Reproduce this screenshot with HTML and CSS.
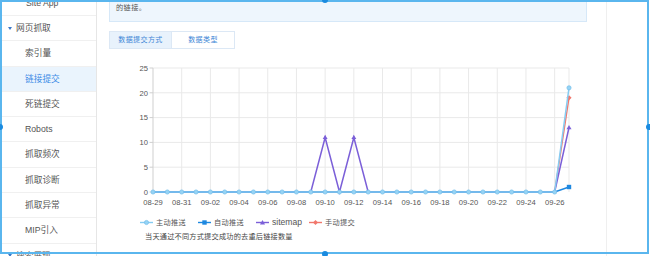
FILE: index.html
```html
<!DOCTYPE html>
<html lang="zh-CN">
<head>
<meta charset="utf-8">
<title>链接提交</title>
<link rel="stylesheet" href="styles.css">
</head>
<body>
<div class="page">
  <aside class="sidebar">
    <div class="nav-item first">Site App</div>
    <div class="nav-group"><span class="caret"></span>网页抓取</div>
    <div class="nav-item">索引量</div>
    <div class="nav-item active">链接提交</div>
    <div class="nav-item">死链提交</div>
    <div class="nav-item">Robots</div>
    <div class="nav-item">抓取频次</div>
    <div class="nav-item">抓取诊断</div>
    <div class="nav-item">抓取异常</div>
    <div class="nav-item">MIP引入</div>
    <div class="nav-group"><span class="caret"></span>搜索展现</div>
  </aside>

  <main class="main">
    <div class="notice">的链接。</div>
    <div class="tabs">
      <div class="tab active">数据提交方式</div>
      <div class="tab">数据类型</div>
    </div>

    <svg class="chart" viewBox="109 52 478 158" xmlns="http://www.w3.org/2000/svg">
      <g class="grid" stroke="#e9e9e9" stroke-width="1">
        <line x1="153" y1="68" x2="569" y2="68"/>
        <line x1="153" y1="92.8" x2="569" y2="92.8"/>
        <line x1="153" y1="117.6" x2="569" y2="117.6"/>
        <line x1="153" y1="142.4" x2="569" y2="142.4"/>
        <line x1="153" y1="167.2" x2="569" y2="167.2"/>
        <line x1="181.69" y1="68" x2="181.69" y2="192"/>
        <line x1="210.38" y1="68" x2="210.38" y2="192"/>
        <line x1="239.07" y1="68" x2="239.07" y2="192"/>
        <line x1="267.76" y1="68" x2="267.76" y2="192"/>
        <line x1="296.45" y1="68" x2="296.45" y2="192"/>
        <line x1="325.14" y1="68" x2="325.14" y2="192"/>
        <line x1="353.83" y1="68" x2="353.83" y2="192"/>
        <line x1="382.52" y1="68" x2="382.52" y2="192"/>
        <line x1="411.21" y1="68" x2="411.21" y2="192"/>
        <line x1="439.9" y1="68" x2="439.9" y2="192"/>
        <line x1="468.59" y1="68" x2="468.59" y2="192"/>
        <line x1="497.28" y1="68" x2="497.28" y2="192"/>
        <line x1="525.97" y1="68" x2="525.97" y2="192"/>
        <line x1="554.66" y1="68" x2="554.66" y2="192"/>
        <line x1="569" y1="68" x2="569" y2="192"/>
      </g>
      <g stroke="#cfcfcf" stroke-width="1">
        <line x1="153" y1="68" x2="153" y2="192"/>
        <line x1="149.5" y1="68" x2="153" y2="68"/>
        <line x1="149.5" y1="92.8" x2="153" y2="92.8"/>
        <line x1="149.5" y1="117.6" x2="153" y2="117.6"/>
        <line x1="149.5" y1="142.4" x2="153" y2="142.4"/>
        <line x1="149.5" y1="167.2" x2="153" y2="167.2"/>
        <line x1="149.5" y1="192" x2="153" y2="192"/>
      </g>
      <g class="ylab" text-anchor="end">
        <text x="148" y="70.7">25</text>
        <text x="148" y="95.5">20</text>
        <text x="148" y="120.3">15</text>
        <text x="148" y="145.1">10</text>
        <text x="148" y="169.9">5</text>
        <text x="148" y="194.7">0</text>
      </g>
      <g class="xlab" text-anchor="middle">
        <text x="153" y="204.8">08-29</text>
        <text x="181.69" y="204.8">08-31</text>
        <text x="210.38" y="204.8">09-02</text>
        <text x="239.07" y="204.8">09-04</text>
        <text x="267.76" y="204.8">09-06</text>
        <text x="296.45" y="204.8">09-08</text>
        <text x="325.14" y="204.8">09-10</text>
        <text x="353.83" y="204.8">09-12</text>
        <text x="382.52" y="204.8">09-14</text>
        <text x="411.21" y="204.8">09-16</text>
        <text x="439.9" y="204.8">09-18</text>
        <text x="468.59" y="204.8">09-20</text>
        <text x="497.28" y="204.8">09-22</text>
        <text x="525.97" y="204.8">09-24</text>
        <text x="554.66" y="204.8">09-26</text>
      </g>

      <!-- 手动提交 -->
      <polyline fill="none" stroke="#f1776c" stroke-width="1.4" points="153,192 554.66,192 569,97.76"/>
      <polygon fill="#f1776c" points="569,95.2 571.6,97.76 569,100.3 566.4,97.76"/>
      <!-- sitemap -->
      <polyline fill="none" stroke="#7b5fd8" stroke-width="1.5" points="153,192 310.79,192 325.14,137.44 339.48,192 353.83,137.44 368.17,192 554.66,192 569,127.52"/>
      <polygon fill="#7b5fd8" points="325.14,134.9 327.6,139.1 322.7,139.1"/>
      <polygon fill="#7b5fd8" points="353.83,134.9 356.3,139.1 351.4,139.1"/>
      <polygon fill="#7b5fd8" points="569,125 571.5,129.2 566.5,129.2"/>
      <!-- 自动推送 -->
      <polyline fill="none" stroke="#1e88e0" stroke-width="1.5" points="153,192 554.66,192 569,187.04"/>
      <rect x="566.8" y="184.8" width="4.4" height="4.4" fill="#1e88e0"/>
      <!-- 主动推送 -->
      <polyline fill="none" stroke="#86ccf2" stroke-width="1.5" points="153,192 554.66,192 569,87.84"/>
      <g fill="#95d3f5" stroke="#72bde9" stroke-width="0.7">
        <circle cx="153" cy="192" r="2.1"/>
        <circle cx="167.34" cy="192" r="2.1"/>
        <circle cx="181.69" cy="192" r="2.1"/>
        <circle cx="196.03" cy="192" r="2.1"/>
        <circle cx="210.38" cy="192" r="2.1"/>
        <circle cx="224.72" cy="192" r="2.1"/>
        <circle cx="239.07" cy="192" r="2.1"/>
        <circle cx="253.41" cy="192" r="2.1"/>
        <circle cx="267.76" cy="192" r="2.1"/>
        <circle cx="282.1" cy="192" r="2.1"/>
        <circle cx="296.45" cy="192" r="2.1"/>
        <circle cx="310.79" cy="192" r="2.1"/>
        <circle cx="325.14" cy="192" r="2.1"/>
        <circle cx="339.48" cy="192" r="2.1"/>
        <circle cx="353.83" cy="192" r="2.1"/>
        <circle cx="368.17" cy="192" r="2.1"/>
        <circle cx="382.52" cy="192" r="2.1"/>
        <circle cx="396.86" cy="192" r="2.1"/>
        <circle cx="411.21" cy="192" r="2.1"/>
        <circle cx="425.55" cy="192" r="2.1"/>
        <circle cx="439.9" cy="192" r="2.1"/>
        <circle cx="454.24" cy="192" r="2.1"/>
        <circle cx="468.59" cy="192" r="2.1"/>
        <circle cx="482.93" cy="192" r="2.1"/>
        <circle cx="497.28" cy="192" r="2.1"/>
        <circle cx="511.62" cy="192" r="2.1"/>
        <circle cx="525.97" cy="192" r="2.1"/>
        <circle cx="540.31" cy="192" r="2.1"/>
        <circle cx="554.66" cy="192" r="2.1"/>
        <circle cx="569" cy="87.84" r="2.1"/>
      </g>
    </svg>

    <div class="legend">
      <div class="legend-item">
        <svg class="lg-mark" viewBox="0 0 13 7"><line x1="0" y1="3.5" x2="13" y2="3.5" stroke="#86ccf2" stroke-width="1.4"/><circle cx="6.5" cy="3.5" r="2.1" fill="#95d3f5" stroke="#72bde9" stroke-width="0.7"/></svg>
        <span>主动推送</span>
      </div>
      <div class="legend-item">
        <svg class="lg-mark" viewBox="0 0 13 7"><line x1="0" y1="3.5" x2="13" y2="3.5" stroke="#1e88e0" stroke-width="1.4"/><rect x="4.3" y="1.3" width="4.4" height="4.4" fill="#1e88e0"/></svg>
        <span>自动推送</span>
      </div>
      <div class="legend-item">
        <svg class="lg-mark" viewBox="0 0 13 7"><line x1="0" y1="3.5" x2="13" y2="3.5" stroke="#7b5fd8" stroke-width="1.4"/><polygon points="6.5,1 9,5.4 4,5.4" fill="#7b5fd8"/></svg>
        <span class="latin">sitemap</span>
      </div>
      <div class="legend-item">
        <svg class="lg-mark" viewBox="0 0 13 7"><line x1="0" y1="3.5" x2="13" y2="3.5" stroke="#f1776c" stroke-width="1.4"/><polygon points="6.5,1 9,3.5 6.5,6 4,3.5" fill="#f1776c"/></svg>
        <span>手动提交</span>
      </div>
    </div>
    <p class="caption">当天通过不同方式提交成功的去重后链接数量</p>
  </main>

  <div class="side-right"></div>
</div>

<div class="selection">
  <span class="handle h-top"></span>
  <span class="handle h-left"></span>
  <span class="handle h-right"></span>
  <span class="handle h-bottom"></span>
</div>
</body>
</html>
```

FILE: styles.css
```css
* {
  box-sizing: border-box;
  margin: 0;
  padding: 0;
}

html, body {
  width: 650px;
  height: 256px;
  overflow: hidden;
  background: #ffffff;
}

body {
  position: relative;
  font-family: "Liberation Sans", "Noto Sans CJK SC", sans-serif;
  color: #555555;
}

.page {
  display: flex;
  height: 256px;
}

/* sidebar */
.sidebar {
  width: 97px;
  flex: none;
  border-right: 1px solid #e6e6e6;
  overflow: hidden;
  font-size: 8.7px;
  color: #555555;
}

.nav-item,
.nav-group {
  height: 25.3px;
  line-height: 24.3px;
  border-bottom: 1px solid #f0f0f0;
  white-space: nowrap;
}

.nav-item {
  padding-left: 25px;
}

.nav-item.first {
  margin-top: -9.3px;
  padding-left: 26px;
}

.nav-item.active {
  background: #eaf4fd;
  color: #3b8be6;
}

.nav-group {
  display: flex;
  align-items: center;
  padding-left: 8px;
}

.caret {
  width: 0;
  height: 0;
  border-left: 2.5px solid transparent;
  border-right: 2.5px solid transparent;
  border-top: 3.2px solid #3a78c8;
  margin-right: 4px;
}

/* main */
.main {
  width: 510px;
  flex: none;
  border-right: 1px solid #efefef;
  padding: 0 19px 0 12px;
}

.notice {
  margin-top: -1px;
  border: 1px solid #d6e8f8;
  background: #eef6fd;
  padding: 2px 6px 7px;
  font-size: 7.2px;
  line-height: 12px;
  color: #555555;
  letter-spacing: 0.4px;
}

.tabs {
  display: flex;
  margin-top: 9px;
}

.tab {
  width: 63px;
  height: 18px;
  border: 1px solid #dce8f5;
  font-size: 7px;
  line-height: 16px;
  text-align: center;
  color: #3d86d6;
  letter-spacing: 0.4px;
}

.tab + .tab {
  border-left: none;
}

.tab.active {
  background: #e8f2fc;
}

.chart {
  display: block;
  width: 478px;
  height: 158px;
  margin-top: 3px;
}

.chart text {
  font-family: "Liberation Sans", sans-serif;
  font-size: 7.6px;
  fill: #555555;
}

.legend {
  display: grid;
  grid-template-columns: 58px 58px 53px auto;
  margin-top: 7px;
  padding-left: 31px;
  height: 10px;
  align-items: center;
  font-size: 7.2px;
  color: #555555;
}

.legend-item {
  display: flex;
  align-items: center;
  gap: 3px;
  white-space: nowrap;
  letter-spacing: 0.3px;
}

.legend-item .latin {
  font-size: 8.6px;
  letter-spacing: 0;
}

.lg-mark {
  width: 13px;
  height: 7px;
  flex: none;
}

.caption {
  margin-top: 5px;
  padding-left: 36px;
  font-size: 7.2px;
  line-height: 10px;
  color: #444444;
  letter-spacing: 0.2px;
  white-space: nowrap;
}

.side-right {
  flex: 1;
}

/* screenshot selection frame overlay */
.selection {
  position: absolute;
  left: 0;
  top: 0;
  width: 649px;
  height: 254px;
  border: 2px solid #5ab6ee;
  pointer-events: none;
}

.handle {
  position: absolute;
  width: 6px;
  height: 6px;
  border-radius: 50%;
  background: #1a8be0;
}

.h-top { left: 320px; top: -5px; }
.h-bottom { left: 320px; bottom: -5px; }
.h-left { left: -5px; top: 122px; }
.h-right { right: -5px; top: 122px; }
```
